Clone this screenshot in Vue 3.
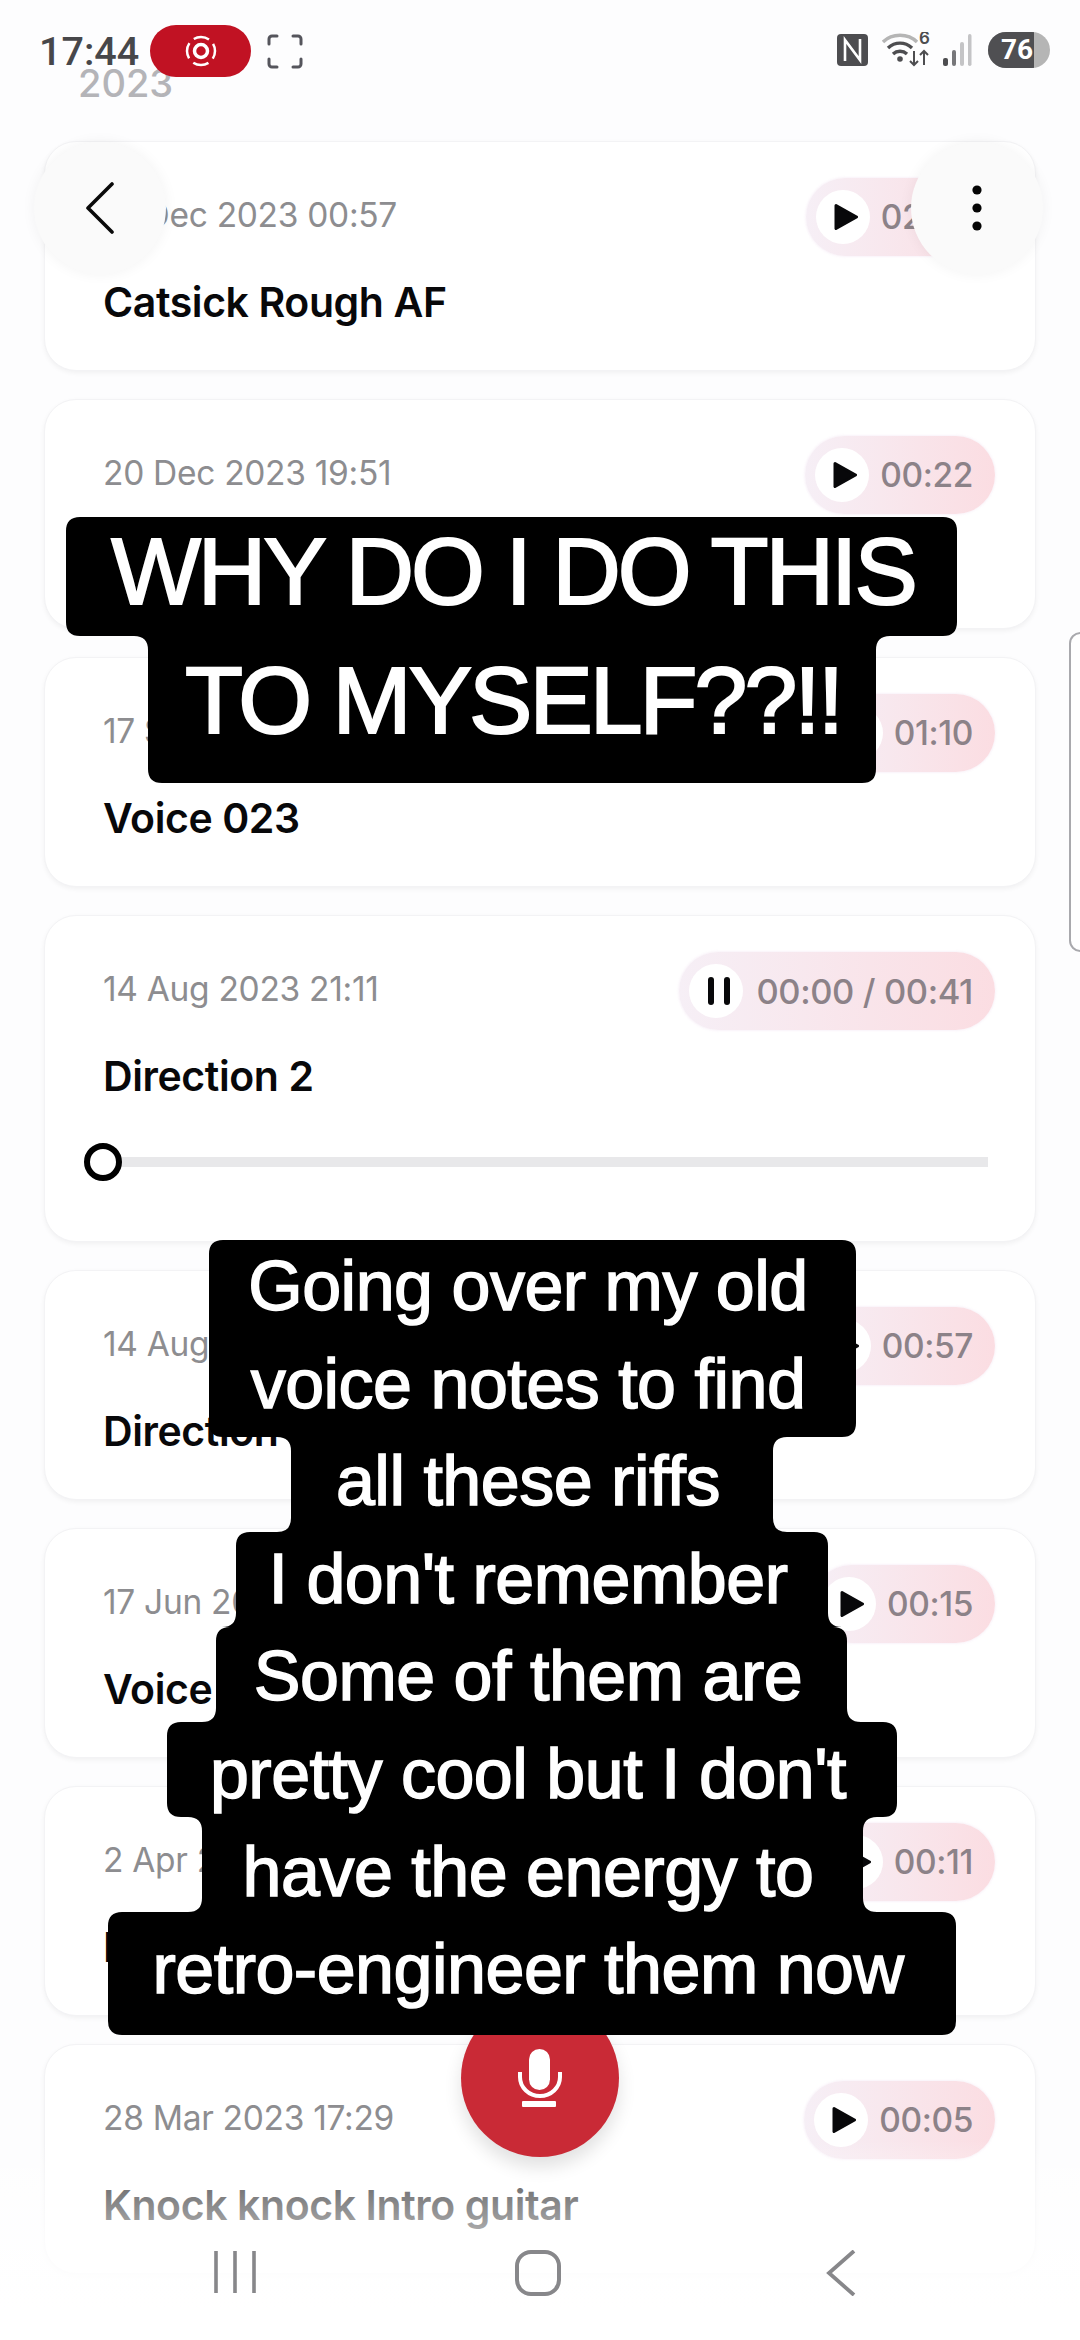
<template>
  <div class="screen">
    <div class="year">2023</div>

    <!-- Lista de notas -->
    <div class="list">
      <div v-for="nota in notas" :key="nota.date" class="card" :class="{ open: nota.playing }">
        <div class="card-top">
          <span class="date">{{ nota.date }}</span>
          <div class="pill">
            <span class="pill-btn">
              <svg v-if="nota.playing" class="pause" width="22" height="30" viewBox="0 0 22 30">
                <rect x="0" y="1" width="6" height="28" rx="3" fill="#08080a" />
                <rect x="16" y="1" width="6" height="28" rx="3" fill="#08080a" />
              </svg>
              <svg v-else class="play" width="24" height="28" viewBox="0 0 24 28">
                <path d="M2 2.5 L22.5 14 L2 25.5 Z" fill="#08080a" stroke="#08080a" stroke-width="3" stroke-linejoin="round" />
              </svg>
            </span>
            <span class="time">{{ nota.time }}</span>
          </div>
        </div>
        <div class="title">{{ nota.title }}</div>
        <div v-if="nota.playing" class="slider">
          <span class="thumb"></span>
          <span class="track"></span>
        </div>
      </div>
    </div>

    <div class="fade"></div>
    <div class="scroll-handle"></div>

    <!-- Barra de estado -->
    <div class="status">
      <div class="status-left">
        <span class="clock">17:44</span>
        <span class="rec">
          <svg width="34" height="34" viewBox="0 0 34 34" fill="none" stroke="#fff">
            <circle cx="17" cy="17" r="6.5" stroke-width="3.5" />
            <circle cx="17" cy="17" r="14" stroke-width="2.5" stroke-dasharray="16 6" stroke-dashoffset="8" />
          </svg>
        </span>
        <svg class="frame" width="36" height="35" viewBox="0 0 36 35" fill="none" stroke="#55555c" stroke-width="3" stroke-linecap="round">
          <path d="M2 10V5a3 3 0 0 1 3-3h5M26 2h5a3 3 0 0 1 3 3v5M34 25v5a3 3 0 0 1-3 3h-5M10 33H5a3 3 0 0 1-3-3v-5" />
        </svg>
      </div>
      <div class="status-right">
        <svg width="31" height="32" viewBox="0 0 31 32">
          <rect width="31" height="32" rx="4" fill="#4d4d50" />
          <path d="M8 27V6l15 20V5" fill="none" stroke="#fff" stroke-width="2.6" />
        </svg>
        <svg class="wifi" width="50" height="36" viewBox="0 0 50 36" fill="none">
          <path d="M1 10C10 1 26 1 35 10" stroke="#b5b5b5" stroke-width="3.4" />
          <path d="M6 16c7-6.5 17-6.5 24 0M11 22c4-3.6 10-3.6 14 0" stroke="#4d4d50" stroke-width="3.4" />
          <circle cx="18" cy="27" r="2.8" fill="#4d4d50" />
          <path d="M32 19v14M28 29l4 4 4-4M42 33V19M38 23l4-4 4 4" stroke="#4d4d50" stroke-width="2" />
          <text x="37" y="12" class="wifi-six">6</text>
        </svg>
        <svg class="signal" width="30" height="34" viewBox="0 0 30 34">
          <rect x="1" y="25" width="5" height="8" rx="2" fill="#4d4d50" />
          <rect x="10" y="17" width="4" height="16" rx="2" fill="#77777a" />
          <rect x="18" y="9" width="4" height="24" rx="2" fill="#c4c4c6" />
          <rect x="26" y="1" width="3.5" height="32" rx="1.7" fill="#c4c4c6" />
        </svg>
        <div class="battery"><span class="battery-level">76</span></div>
      </div>
    </div>

    <button class="round back">
      <svg width="28" height="52" viewBox="0 0 28 52" fill="none" stroke="#0a0a0a" stroke-width="3.6" stroke-linecap="round" stroke-linejoin="round">
        <path d="M26 2 L2 26 L26 50" />
      </svg>
    </button>
    <button class="round more">
      <svg width="12" height="48" viewBox="0 0 12 48" fill="#050505">
        <circle cx="6" cy="6" r="4.6" />
        <circle cx="6" cy="24" r="4.6" />
        <circle cx="6" cy="42" r="4.6" />
      </svg>
    </button>

    <button class="fab">
      <svg width="46" height="60" viewBox="0 0 46 60" fill="none">
        <rect x="12" y="1" width="21" height="41" rx="10.5" fill="#fff" />
        <path d="M3 24v5a20 19 0 0 0 40 0v-5" stroke="#fff" stroke-width="4" />
        <rect x="5" y="53" width="34" height="6" rx="1" fill="#fff" />
      </svg>
    </button>

    <!-- Subtítulos del vídeo -->
    <svg class="caption-bg" width="1080" height="2340" viewBox="0 0 1080 2340">
      <path v-for="grupo in subtitulos" :key="grupo.top" :d="blobPath(grupo.boxes)" fill="#000" />
    </svg>
    <div
      v-for="grupo in subtitulos"
      :key="grupo.top"
      class="caption"
      :class="grupo.kind"
      :style="{ top: grupo.top + 'px', width: grupo.center * 2 + 'px' }"
    >
      <div v-for="linea in grupo.lines" :key="linea" class="caption-line">{{ linea }}</div>
    </div>

    <!-- Barra de navegación -->
    <div class="navbar">
      <svg width="44" height="44" viewBox="0 0 44 44" stroke="#87878a" stroke-width="3.6">
        <path d="M3 1v42M22 1v42M41 1v42" />
      </svg>
      <svg class="nav-home" width="46" height="46" viewBox="0 0 46 46" fill="none" stroke="#87878a" stroke-width="4">
        <rect x="2" y="2" width="42" height="42" rx="14" />
      </svg>
      <svg class="nav-back" width="30" height="46" viewBox="0 0 30 46" fill="none" stroke="#87878a" stroke-width="3.8">
        <path d="M28 1 L3 23 L28 45" />
      </svg>
    </div>
  </div>
</template>

<script setup>
const notas = [
  { date: '21 Dec 2023 00:57', title: 'Catsick Rough AF', time: '02:28' },
  { date: '20 Dec 2023 19:51', title: 'Voice 024', time: '00:22' },
  { date: '17 Sep 2023 18:02', title: 'Voice 023', time: '01:10' },
  { date: '14 Aug 2023 21:11', title: 'Direction 2', time: '00:00 / 00:41', playing: true },
  { date: '14 Aug 2023 20:48', title: 'Direction 1', time: '00:57' },
  { date: '17 Jun 2023 16:20', title: 'Voice 022', time: '00:15' },
  { date: '2 Apr 2023 13:05', title: 'Intro idea', time: '00:11' },
  { date: '28 Mar 2023 17:29', title: 'Knock knock Intro guitar', time: '00:05' }
]

const subtitulos = [
  {
    kind: 'big',
    center: 513,
    top: 507,
    lines: ['WHY DO I DO THIS', 'TO MYSELF??!!'],
    boxes: [
      { l: 66, r: 957, t: 517, b: 636 },
      { l: 148, r: 876, t: 636, b: 783 }
    ]
  },
  {
    kind: 'small',
    center: 528,
    top: 1238,
    lines: [
      'Going over my old',
      'voice notes to find',
      'all these riffs',
      "I don't remember",
      'Some of them are',
      "pretty cool but I don't",
      'have the energy to',
      'retro-engineer them now'
    ],
    boxes: [
      { l: 209, r: 856, t: 1240, b: 1437 },
      { l: 291, r: 773, t: 1437, b: 1532 },
      { l: 236, r: 828, t: 1532, b: 1627 },
      { l: 216, r: 847, t: 1627, b: 1722 },
      { l: 167, r: 897, t: 1722, b: 1817 },
      { l: 202, r: 863, t: 1817, b: 1912 },
      { l: 108, r: 956, t: 1912, b: 2035 }
    ]
  }
]

// contorno con esquinas redondeadas hacia dentro y hacia fuera
const blobPath = (boxes) => {
  const R = 14
  const first = boxes[0]
  const last = boxes[boxes.length - 1]
  let d = `M${first.l + R} ${first.t}H${first.r - R}Q${first.r} ${first.t} ${first.r} ${first.t + R}`
  for (let i = 0; i < boxes.length - 1; i++) {
    const a = boxes[i].r
    const b = boxes[i + 1].r
    const y = boxes[i].b
    const s = Math.sign(b - a)
    d += `V${y - R}Q${a} ${y} ${a + s * R} ${y}H${b - s * R}Q${b} ${y} ${b} ${y + R}`
  }
  d += `V${last.b - R}Q${last.r} ${last.b} ${last.r - R} ${last.b}H${last.l + R}Q${last.l} ${last.b} ${last.l} ${last.b - R}`
  for (let i = boxes.length - 1; i > 0; i--) {
    const a = boxes[i].l
    const b = boxes[i - 1].l
    const y = boxes[i].t
    const s = Math.sign(b - a)
    d += `V${y + R}Q${a} ${y} ${a + s * R} ${y}H${b - s * R}Q${b} ${y} ${b} ${y - R}`
  }
  d += `V${first.t + R}Q${first.l} ${first.t} ${first.l + R} ${first.t}Z`
  return d
}
</script>

<style>
html, body {
  margin: 0;
  background: #fff;
}
</style>

<style scoped>
.screen {
  position: relative;
  width: 1080px;
  height: 2340px;
  overflow: hidden;
  background: #fdfdfe;
  font-family: Inter, "Liberation Sans", sans-serif;
}

.year {
  height: 141px;
  box-sizing: border-box;
  padding: 65px 0 0 78px;
  font-size: 38px;
  line-height: 36px;
  font-weight: 500;
  color: #b4b4b8;
}

.list {
  display: flex;
  flex-direction: column;
  gap: 28px;
  padding: 0 44px;
}

.card {
  box-sizing: border-box;
  height: 230px;
  padding: 36px 40px 0 58px;
  background: #fff;
  border: 1px solid #f3f3f5;
  border-radius: 32px;
  box-shadow: 0 2px 5px rgba(0, 0, 0, 0.05);
}

.card.open {
  height: 327px;
}

.card-top {
  display: flex;
  align-items: center;
  justify-content: space-between;
  height: 78px;
}

.date {
  margin-bottom: 5px;
  font-size: 33.5px;
  letter-spacing: -0.3px;
  color: #8d8d90;
}

.pill {
  display: flex;
  align-items: center;
  gap: 11px;
  height: 78px;
  padding: 0 22px 0 10px;
  border-radius: 39px;
  background: linear-gradient(90deg, #f6eff6, #fbdde2);
  box-shadow: 0 0 3px rgba(240, 225, 240, 0.8);
}

.pill-btn {
  display: flex;
  align-items: center;
  justify-content: center;
  width: 54px;
  height: 54px;
  border-radius: 50%;
  background: #fff;
}

.play {
  margin-left: 6px;
}

.pause {
  margin-left: 6px;
}

.time {
  font-size: 33.5px;
  font-weight: 500;
  letter-spacing: -0.4px;
  color: #8c8288;
}

.open .time {
  font-size: 34.5px;
}

.open .pill {
  gap: 13px;
}

.title {
  margin-top: 23px;
  font-size: 41px;
  line-height: 46px;
  font-weight: 600;
  letter-spacing: -0.4px;
  color: #08080a;
}

.slider {
  position: relative;
  display: flex;
  align-items: center;
  height: 38px;
  margin: 44px 7px 0 -19px;
}

.thumb {
  position: relative;
  z-index: 1;
  box-sizing: border-box;
  width: 38px;
  height: 38px;
  border: 6px solid #000;
  border-radius: 50%;
  background: #fff;
}

.track {
  flex: 1;
  height: 10px;
  background: #e8e8ea;
}

.fade {
  position: absolute;
  left: 0;
  right: 0;
  top: 2140px;
  height: 200px;
  background: linear-gradient(180deg, rgba(255, 255, 255, 0) 0%, rgba(255, 255, 255, 0.45) 25%, rgba(255, 255, 255, 0.85) 65%, #fff 85%);
}

.scroll-handle {
  position: absolute;
  top: 632px;
  right: -12px;
  box-sizing: border-box;
  width: 23px;
  height: 320px;
  border: 2px solid #a9a9ad;
  border-radius: 12px;
  background: #fff;
}

.status {
  position: absolute;
  top: 0;
  left: 0;
  right: 0;
  display: flex;
  justify-content: space-between;
  align-items: flex-start;
  padding: 25px 30px 0 39px;
}

.status-left {
  display: flex;
  align-items: center;
  height: 52px;
}

.clock {
  width: 111px;
  font-family: Roboto, "Liberation Sans", sans-serif;
  font-size: 39.5px;
  font-weight: 500;
  color: #47474a;
}

.rec {
  display: flex;
  align-items: center;
  justify-content: center;
  width: 101px;
  height: 52px;
  border-radius: 26px;
  background: #c11223;
}

.frame {
  margin-left: 16px;
}

.status-right {
  display: flex;
  align-items: center;
  height: 52px;
  margin-top: -1px;
}

.wifi {
  margin-left: 14px;
}

.wifi-six {
  font-size: 17px;
  font-weight: 600;
  fill: #4d4d50;
}

.signal {
  margin-left: 10px;
}

.battery {
  width: 62px;
  height: 36px;
  margin-left: 16px;
  overflow: hidden;
  border-radius: 18px;
  background: #b5b5b5;
}

.battery-level {
  display: block;
  width: 46px;
  height: 36px;
  padding-left: 13px;
  box-sizing: border-box;
  background: #4f4f52;
  font-family: Roboto, "Liberation Sans", sans-serif;
  font-size: 28px;
  line-height: 36px;
  font-weight: 700;
  color: #fff;
}

.round {
  position: absolute;
  top: 142px;
  display: flex;
  align-items: center;
  justify-content: center;
  width: 132px;
  height: 132px;
  padding: 0;
  border: none;
  border-radius: 50%;
  background: #fafafa;
  box-shadow: 0 0 14px rgba(0, 0, 0, 0.05);
}

.back {
  left: 34px;
}

.more {
  left: 911px;
}

.fab {
  position: absolute;
  top: 1999px;
  left: 461px;
  display: flex;
  align-items: center;
  justify-content: center;
  width: 158px;
  height: 158px;
  padding: 0;
  border: none;
  border-radius: 50%;
  background: #c92a36;
  box-shadow: 0 10px 18px rgba(0, 0, 0, 0.12);
}

.caption-bg {
  position: absolute;
  top: 0;
  left: 0;
}

.caption {
  position: absolute;
  left: 0;
  font-family: "Liberation Sans", Arial, sans-serif;
  text-align: center;
  color: #fff;
  white-space: nowrap;
  -webkit-text-stroke: 1.5px #fff;
}

.caption.big {
  font-size: 95px;
  line-height: 129px;
  letter-spacing: -3px;
  -webkit-text-stroke: 2px #fff;
}

.caption.small {
  font-size: 70px;
  line-height: 97.6px;
  letter-spacing: -0.5px;
}

.navbar {
  position: absolute;
  top: 2250px;
  left: 213px;
  display: flex;
  align-items: flex-start;
}

.nav-home {
  margin-left: 258px;
}

.nav-back {
  margin-left: 265px;
}
</style>
